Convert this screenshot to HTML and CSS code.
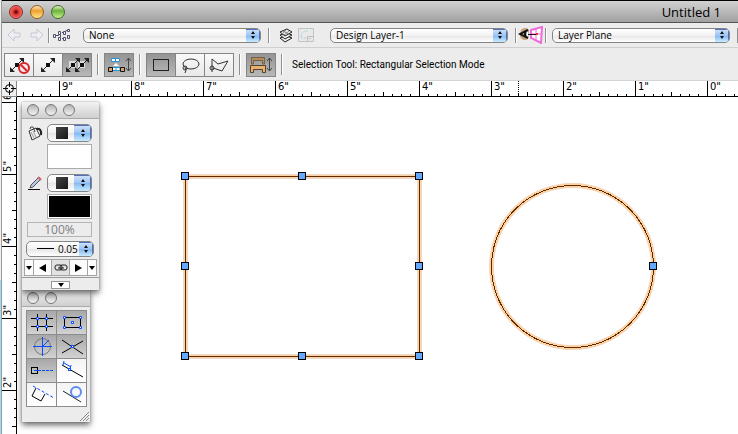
FILE: index.html
```html
<!DOCTYPE html>
<html lang="en">
  <head>
    <meta charset="UTF-8" />
    <meta name="viewport" content="width=device-width, initial-scale=1.0" />
    <title>Untitled 1</title>
    <link rel="stylesheet" href="styles.css">
  </head>
  <body>
    <svg class="defs" aria-hidden="true">
      <defs>
        <symbol id="updown" viewBox="0 0 6 10">
          <path d="M3 1L5 4H1zM3 9L5 6H1z" fill="#111" />
        </symbol>
        <g id="node">
          <path d="M-7 7L6 -6" stroke="#222" />
          <path d="M2 -7H7V-2zM-7 2V7H-2z" fill="#222" />
          <rect x="-2" y="-2" width="4" height="4" fill="#111" />
        </g>
        <g id="handle">
          <rect x="-4" y="-4" width="8" height="8" fill="#000" />
          <rect x="-3" y="-3" width="6" height="6" fill="#65a8ff" />
        </g>
      </defs>
    </svg>

    <main class="window">
      <header class="title-bar">
        <div class="lights">
          <button class="light red" aria-label="Close"></button>
          <button class="light yellow" aria-label="Minimize"></button>
          <button class="light green" aria-label="Zoom"></button>
        </div>
        <h1>Untitled 1</h1>
      </header>

      <nav class="view-bar">
        <button class="icon-btn" aria-label="Back">
          <svg width="14" height="14" viewBox="0 0 14 14"><path d="M1 7L7 1V5H13V9H7V13z" fill="#eeeef4" stroke="#c6c6d4" /></svg>
        </button>
        <button class="icon-btn forward" aria-label="Forward">
          <svg width="14" height="14" viewBox="0 0 14 14"><path d="M13 7L7 1V5H1V9H7V13z" fill="#eeeef4" stroke="#c6c6d4" /></svg>
        </button>
        <span class="sep"></span>
        <button class="icon-btn classes" aria-label="Classes">
          <svg width="17" height="14" viewBox="0 0 17 14" fill="#f4f4f4" stroke="#50506a">
            <path d="M3 7.500H6M7.500 6V9M9 4.500H11M9 10.500H11M12.500 6V3L14 2.500" fill="none" />
            <path d="M.5 6.500h2v3h-2zM5.500 3.500h2v3h-2zM5.500 9.500h2v3h-2zM10.500 3.500h2v3h-2zM10.500 9.500h2v3h-2zM14.500 1.500h2v2h-2zM14.500 7.500h2v3h-2z" />
          </svg>
        </button>
        <span class="popup wide">
          <select aria-label="Active class"><option>None</option></select>
          <span class="cap"><svg width="6" height="10"><use href="#updown" /></svg></span>
        </span>
        <span class="sep"></span>
        <button class="icon-btn layers" aria-label="Layers">
          <svg width="14" height="15" viewBox="0 0 14 15" fill="#eee" stroke="#222">
            <path d="M1 10L8 8L13 10L6 14z" /><path d="M1 7L8 5L13 7L6 11z" /><path d="M1 4L8 1L13 4L6 8z" />
            <path d="M4 3L10 6M7 2L3 6M10 3L5 7" stroke="#888" />
          </svg>
        </button>
        <button class="icon-btn" aria-label="Sheet view">
          <svg width="16" height="14" viewBox="0 0 16 14" fill="none">
            <path d="M.5 .5H15.500V13.500H.5z" fill="#e9e9e9" stroke="#c2c2c2" />
            <path d="M3 9V6L7 3H11M3 10H8" stroke="#a9d0e4" stroke-dasharray="2 1" />
            <path d="M9.500 13V8.500H15M11 10.500H13" stroke="#bbb" />
          </svg>
        </button>
        <span class="popup wide layer">
          <select aria-label="Active layer"><option>Design Layer-1</option></select>
          <span class="cap"><svg width="6" height="10"><use href="#updown" /></svg></span>
        </span>
        <span class="sep"></span>
        <button class="icon-btn eye" aria-label="Look at plane">
          <svg width="26" height="18" viewBox="0 0 26 18" fill="none">
            <path d="M3 4C6 1 10 2 11 4L10 13C6 16 1 12 2 8z" fill="#c8a27c" />
            <path d="M13 4L24 1L23 17L13 12z" fill="#fff" stroke="#f06bd9" stroke-width="2" />
            <path d="M18 2V15M13 8H24" stroke="#f06bd9" />
            <path d="M10 4L2 8L10 12" fill="#fff" stroke="#111" stroke-width="2" />
            <path d="M8 6Q6 8 8 10" stroke="#111" stroke-width="2" />
            <path d="M10 8.500H19" stroke="#111" /><rect x="18" y="7" width="2" height="2" fill="#e33" />
          </svg>
        </button>
        <span class="sep"></span>
        <span class="popup wide plane">
          <select aria-label="Active plane"><option>Layer Plane</option></select>
          <span class="cap"><svg width="6" height="10"><use href="#updown" /></svg></span>
        </span>
        <span class="sep last"></span>
      </nav>

      <section class="tool-bar">
        <div class="group">
          <button aria-label="Disable interactive scaling">
            <svg width="28" height="22" viewBox="0 0 28 22">
              <use href="#node" x="12" y="11" />
              <circle cx="19" cy="14" r="5" fill="#f5e8e8" fill-opacity=".6" stroke="#d9262c" stroke-width="2" />
              <path d="M16 11L22 17" stroke="#d9262c" stroke-width="2" />
            </svg>
          </button>
          <button aria-label="Single object scaling">
            <svg width="28" height="22" viewBox="0 0 28 22"><use href="#node" x="14" y="11" /></svg>
          </button>
          <button class="on" aria-label="Unrestricted scaling">
            <svg width="28" height="22" viewBox="0 0 28 22">
              <rect x="6" y="7" width="7" height="7" fill="#ddd" /><rect x="15" y="7" width="7" height="7" fill="#ddd" />
              <use href="#node" x="10" y="11" /><use href="#node" x="19" y="11" />
            </svg>
          </button>
        </div>
        <span class="sep"></span>
        <div class="group">
          <button class="on" aria-label="Wall insertion">
            <svg width="28" height="22" viewBox="0 0 28 22" fill="none">
              <path d="M6.500 4.500H14.500V7.500H6.500zM10.500 4V8" fill="#fff" stroke="#2795d3" />
              <path d="M7 13.500H15V16.500H7zM11 13V17" fill="#fff" stroke="#2795d3" />
              <path d="M3.500 13.500H7.500V17.500H3.500zM15.500 13.500H19.500V17.500H15.500z" fill="#d8a468" stroke="#111" />
              <path d="M8 12H14L11 9z" fill="#fff" />
              <path d="M23.500 4V17M21 7L23.500 4L26 7M21 14L23.500 17L26 14" stroke="#444" />
            </svg>
          </button>
        </div>
        <span class="sep"></span>
        <div class="group">
          <button class="on" aria-label="Rectangular selection">
            <svg width="28" height="22" viewBox="0 0 28 22"><rect x="6.500" y="5.500" width="15" height="11" fill="none" stroke="#222" /></svg>
          </button>
          <button aria-label="Lasso selection">
            <svg width="28" height="22" viewBox="0 0 28 22" fill="none" stroke="#333">
              <ellipse cx="15" cy="10" rx="8" ry="5" /><circle cx="9" cy="14" r="2" /><path d="M9 14Q11 16 9 19" />
            </svg>
          </button>
          <button aria-label="Polygonal selection">
            <svg width="28" height="22" viewBox="0 0 28 22" fill="none" stroke="#333">
              <path d="M7 18V5L13 10L23 7L17 17L8 14" /><circle cx="7" cy="14" r="2" />
            </svg>
          </button>
        </div>
        <span class="sep"></span>
        <div class="group">
          <button class="on" aria-label="Wall stretch">
            <svg width="28" height="22" viewBox="0 0 28 22" fill="none">
              <path d="M4.500 10V3.500H17.500V10H15.500V6.500H6.500V10z" fill="#b38a5c" stroke="#776048" />
              <path d="M3.500 18.500V11.500H18.500V18.500H15.500V15.500H6.500V18.500z" fill="#e8b070" stroke="#58422c" />
              <path d="M22.500 4V17M20 7L22.500 4L25 7M20 14L22.500 17L25 14" stroke="#444" />
            </svg>
          </button>
        </div>
        <span class="sep"></span>
        <p class="mode">Selection Tool: Rectangular Selection Mode</p>
      </section>

      <section class="workspace">
        <div class="corner">
          <svg width="13" height="13" viewBox="0 0 13 13" fill="none" stroke="#000">
            <circle cx="6.500" cy="6.500" r="4" /><path d="M6.500 0V5M6.500 8V13M0 6.500H5M8 6.500H13" />
          </svg>
        </div>
        <div class="ruler-x">
          <div class="scale">
            <span></span><span>9"</span><span>8"</span><span>7"</span><span>6"</span><span>5"</span><span>4"</span><span>3"</span><span>2"</span><span>1"</span><span>0"</span>
          </div>
          <i class="cursor-mark"></i>
        </div>
        <div class="ruler-y">
          <div class="scale">
            <span><b>6"</b></span><span><b>5"</b></span><span><b>4"</b></span><span><b>3"</b></span><span><b>2"</b></span><span></span>
          </div>
        </div>
        <svg class="drawing" role="img" aria-label="Rectangle and circle, both selected">
          <g fill="none">
            <rect x="168.500" y="79.500" width="234" height="180" stroke="#ead9cc" stroke-width="5" />
            <rect x="168.500" y="79.500" width="234" height="180" stroke="#ffd0a0" stroke-width="3" />
            <rect x="168.500" y="79.500" width="234" height="180" stroke="#5c2c00" />
            <circle cx="555.500" cy="169.500" r="81" stroke="#ead9cc" stroke-width="5" />
            <circle cx="555.500" cy="169.500" r="81" stroke="#ffd0a0" stroke-width="4" />
            <circle cx="555.500" cy="169.500" r="81" stroke="#5c2c00" shape-rendering="crispEdges" />
          </g>
          <use href="#handle" x="168" y="79" /><use href="#handle" x="285" y="79" /><use href="#handle" x="402" y="79" />
          <use href="#handle" x="168" y="169" /><use href="#handle" x="402" y="169" />
          <use href="#handle" x="168" y="259" /><use href="#handle" x="285" y="259" /><use href="#handle" x="402" y="259" />
          <use href="#handle" x="636" y="169" />
        </svg>
      </section>
    </main>

    <aside class="palette snapping">
      <div class="palette-bar"><i></i><i></i></div>
      <div class="snaps">
        <button class="on" aria-label="Snap to grid">
          <svg width="28" height="22" viewBox="0 0 28 22" fill="#fff">
            <path d="M3 6.500H25M3 14.500H25M9.500 2V19M18.500 2V19" stroke="#000" />
            <path d="M8.500 5.500h2v2h-2zM17.500 5.500h2v2h-2zM8.500 13.500h2v2h-2zM17.500 13.500h2v2h-2z" stroke="#0a4cff" />
          </svg>
        </button>
        <button class="on" aria-label="Snap to object">
          <svg width="28" height="22" viewBox="0 0 28 22" fill="#fff">
            <path d="M6.500 5.500H22.500V15.500H6.500z" fill="none" stroke="#000" />
            <path d="M5.500 4.500h2v2h-2zM21.500 4.500h2v2h-2zM5.500 14.500h2v2h-2zM21.500 14.500h2v2h-2zM13.500 9.500h2v2h-2z" stroke="#0a4cff" />
          </svg>
        </button>
        <button class="on" aria-label="Snap to angle">
          <svg width="28" height="22" viewBox="0 0 28 22" fill="none">
            <circle cx="14.500" cy="10.500" r="8" stroke="#777" />
            <path d="M5 10.500H24M14.500 1V20M14 11L21 4" stroke="#0a4cff" />
          </svg>
        </button>
        <button class="on" aria-label="Snap to intersection">
          <svg width="28" height="22" viewBox="0 0 28 22"><path d="M4 4L25 18M4 17L25 5" stroke="#000" /><rect x="13.500" y="9.500" width="2" height="2" fill="#fff" stroke="#0a4cff" /></svg>
        </button>
        <button class="on" aria-label="Smart points">
          <svg width="28" height="22" viewBox="0 0 28 22" fill="none">
            <rect x="3.500" y="7.500" width="6" height="6" stroke="#000" /><path d="M6 10.500H10" stroke="#0a4cff" /><path d="M10 10.500H25" stroke="#0a4cff" stroke-dasharray="3 1" />
          </svg>
        </button>
        <button aria-label="Snap to distance">
          <svg width="28" height="22" viewBox="0 0 28 22" fill="#fff">
            <path d="M4 5L25 17" stroke="#000" /><path d="M6 1L5 5M13 5L12 9M6 3L13 7" stroke="#0a4cff" fill="none" /><rect x="10.500" y="8.500" width="2" height="2" stroke="#0a4cff" />
          </svg>
        </button>
        <button aria-label="Smart edge">
          <svg width="28" height="22" viewBox="0 0 28 22" fill="none">
            <path d="M8 4L4 12L13 17L17 10" stroke="#000" /><path d="M5 2L26 14" stroke="#0a4cff" stroke-dasharray="3 2" />
          </svg>
        </button>
        <button aria-label="Snap to tangent">
          <svg width="28" height="22" viewBox="0 0 28 22" fill="none">
            <path d="M5 7L23 18" stroke="#222" /><circle cx="18" cy="8" r="5" stroke="#3970f4" stroke-width="2" stroke-opacity=".8" />
          </svg>
        </button>
      </div>
      <svg class="grip" width="9" height="9" viewBox="0 0 9 9"><path d="M0 9L9 0M3 9L9 3M6 9L9 6" stroke="#888" /></svg>
    </aside>

    <aside class="palette attributes">
      <div class="palette-bar"><i></i><i></i><i></i></div>
      <div class="attrs">
        <svg class="attr-icon" width="16" height="15" viewBox="0 0 16 15">
          <path d="M2 5L9 2L13 10L5 14z" fill="#f2f2f2" stroke="#333" /><path d="M4 6L7 12M6 5L9 11" stroke="#999" />
          <path d="M3 3Q3 0 6 1L8 6" fill="none" stroke="#444" /><path d="M9 3Q15 2 14 9" fill="none" stroke="#222" stroke-width="2" />
        </svg>
        <span class="popup style">
          <select aria-label="Fill style"><option value="solid" label=" "></option></select>
          <i class="chip"></i>
          <span class="cap"><svg width="6" height="10"><use href="#updown" /></svg></span>
        </span>
        <button class="swatch white" aria-label="Fill color"></button>
        <svg class="attr-icon" width="16" height="15" viewBox="0 0 16 15">
          <path d="M3 12L4 9L12 1L14 3L6 11z" fill="#b9c7e8" stroke="#555" /><path d="M11 1L14 4" stroke="#d66" stroke-width="2" />
          <path d="M1 13.500H13" stroke="#111" />
        </svg>
        <span class="popup style">
          <select aria-label="Pen style"><option value="solid" label=" "></option></select>
          <i class="chip"></i>
          <span class="cap"><svg width="6" height="10"><use href="#updown" /></svg></span>
        </span>
        <button class="swatch black" aria-label="Pen color"></button>
      </div>
      <input class="opacity" type="text" value="100%" aria-label="Opacity" disabled />
      <span class="popup weight">
        <select aria-label="Line thickness"><option>0.05</option></select>
        <i class="stroke"></i>
        <span class="cap"><svg width="6" height="10"><use href="#updown" /></svg></span>
      </span>
      <div class="markers">
        <button aria-label="Start marker style"><svg width="6" height="4"><path d="M0 0H6L3 4z" /></svg></button>
        <button class="big" aria-label="Start marker"><svg width="8" height="8"><path d="M7 0V8L0 4z" /></svg></button>
        <button class="link" aria-label="Link markers">
          <svg width="14" height="8" viewBox="0 0 14 8" fill="none" stroke="#222"><rect x="1" y="1" width="7" height="5" rx="2" /><rect x="6" y="1" width="7" height="5" rx="2" /><path d="M4 4H10" /></svg>
        </button>
        <button class="big" aria-label="End marker"><svg width="8" height="8"><path d="M1 0V8L8 4z" /></svg></button>
        <button aria-label="End marker style"><svg width="6" height="4"><path d="M0 0H6L3 4z" /></svg></button>
      </div>
      <div class="palette-foot">
        <button aria-label="More options"><svg width="6" height="4"><path d="M0 0H6L3 4z" /></svg></button>
      </div>
    </aside>
  </body>
</html>
```
FILE: styles.css
```css
* {
  box-sizing: border-box;
}
body {
  margin: 0;
  padding-left: 1px;
  font-family: "Open Sans", "Noto Sans", sans-serif;
  font-size: 10px;
  color: #000;
  background: linear-gradient(#f1f1f1 280px, #9edcf8 280px);
}
button {
  padding: 0;
  border: none;
  background: none;
  display: flex;
  align-items: center;
  justify-content: center;
}
svg {
  display: block;
  flex: none;
}
.defs {
  position: absolute;
  width: 0;
  height: 0;
}

.window {
  display: flex;
  flex-direction: column;
  height: 100vh;
  overflow: hidden;
  border-left: 1px solid #999;
  background: #fff;
}
.title-bar {
  flex: none;
  display: flex;
  align-items: center;
  justify-content: space-between;
  height: 23px;
  padding: 0 17px 0 7px;
  border-top: 1px solid #000;
  border-bottom: 1px solid #555;
  background: linear-gradient(#d2d2d2, #a0a0a0);
}
.title-bar h1 {
  margin: 0;
  font-size: 13px;
  font-weight: normal;
  line-height: 20px;
}
.lights {
  display: flex;
  gap: 7px;
}
.light {
  width: 14px;
  height: 14px;
  border: 1px solid #555;
  border-radius: 50%;
}
.red {
  border-color: #8a2420;
  background: radial-gradient(circle at 50% 50%, #7a0808 1px, #e0403a 3px, #e8544c 5px, #ffb0a8 7px);
}
.yellow {
  border-color: #94601c;
  background: linear-gradient(#fbe6c0, #f0a030 40%, #ffe888);
}
.green {
  border-color: #406c28;
  background: linear-gradient(#dcf0c8, #6cb23c 40%, #c8f090);
}

/* view bar */
.view-bar {
  flex: none;
  display: flex;
  align-items: center;
  height: 25px;
  padding-left: 5px;
  background: #ececec;
  border-bottom: 1px solid #cfcfcf;
}
.sep {
  flex: none;
  width: 2px;
  height: 15px;
  border-left: 1px solid #8e8e8e;
  border-right: 1px solid #fff;
}
.sep.last {
  width: 1px;
  border-right: none;
}
.forward {
  margin: 0 4px 0 9px;
}
.classes {
  margin: 0 13px 0 3px;
}
.layers {
  margin: 0 5px 0 9px;
}
.eye {
  margin: 0 1px;
}

.popup {
  position: relative;
  display: flex;
  height: 15px;
  border: 1px solid #858585;
  border-radius: 5px;
  background: linear-gradient(#fff, #f2f2f2 50%, #e6e6e6 51%, #fff);
  overflow: hidden;
}
.popup select {
  appearance: none;
  flex: 1;
  min-width: 0;
  margin: 0;
  padding: 0 20px 0 5px;
  border: none;
  outline: none;
  background: none;
  font: inherit;
  line-height: 13px;
  color: #000;
}
.popup .cap {
  position: absolute;
  top: 0;
  right: 0;
  bottom: 0;
  width: 14px;
  display: flex;
  align-items: center;
  justify-content: center;
  pointer-events: none;
  background: linear-gradient(#d4e4fa, #9cc4f4 50%, #84b8f2 51%, #c8ecff);
  box-shadow: inset -1px 1px #5070b8;
}
.wide {
  flex: 1;
  margin-right: 7px;
}
.layer {
  margin-left: 16px;
}
.plane {
  margin-left: 5px;
}

/* tool bar */
.tool-bar {
  flex: none;
  display: flex;
  align-items: center;
  gap: 5px;
  height: 33px;
  padding: 1px 0 0 2px;
  background: #ececec;
  border-bottom: 1px solid #d4d4d4;
}
.tool-bar .sep {
  height: 21px;
}
.group {
  display: flex;
  gap: 1px;
  padding: 1px;
  background: #858585;
}
.group button {
  background: linear-gradient(#fafafa, #e8e8e8);
}
.group button.on {
  background: linear-gradient(#949494, #b8b8b8);
}
.mode {
  margin: 0 0 0 4px;
  font-family: Roboto, sans-serif;
  font-size: 10px;
  line-height: 12px;
}

/* rulers and drawing */
.workspace {
  flex: 1;
  min-height: 0;
  display: grid;
  grid-template-columns: 15px 1fr;
  grid-template-rows: 16px 1fr;
}
.corner {
  display: flex;
  align-items: center;
  justify-content: center;
  background: #f0f0f0;
  border-right: 1px solid #888;
  border-bottom: 1px solid #888;
}
.ruler-x,
.ruler-y {
  position: relative;
  overflow: hidden;
  font-family: "DejaVu Sans", sans-serif;
  font-size: 10px;
  line-height: 10px;
}
.ruler-x {
  border-bottom: 1px solid #000;
}
.ruler-x .scale {
  display: flex;
  height: 100%;
  margin-left: -30px;
}
.ruler-x span {
  flex: none;
  width: 72px;
  padding: 1px 0 0 2px;
  border-left: 1px solid #000;
  background:
    linear-gradient(#000, #000) 35px bottom / 1px 4px no-repeat,
    repeating-linear-gradient(90deg, transparent 0 8px, #000 8px 9px) left bottom / 100% 2px no-repeat;
}
.cursor-mark {
  position: absolute;
  left: 501px;
  top: 0;
  bottom: 0;
  border-left: 1px dotted #000;
}
.ruler-y {
  border-right: 1px solid #000;
}
.ruler-y .scale {
  margin-top: -66px;
}
.ruler-y span {
  display: flex;
  align-items: flex-end;
  height: 72px;
  padding: 0 0 2px 1px;
  border-bottom: 1px solid #000;
  background:
    linear-gradient(#000, #000) right 35px / 4px 1px no-repeat,
    repeating-linear-gradient(transparent 0 8px, #000 8px 9px) right top / 2px 100% no-repeat;
}
.ruler-y b {
  font-weight: normal;
  writing-mode: vertical-rl;
  transform: rotate(180deg);
}
.drawing {
  width: 100%;
  height: 100%;
}

/* floating palettes */
.palette {
  position: absolute;
  left: 22px;
  background: #ececec;
  box-shadow: 0 0 1px #777, 0 3px 6px rgba(0, 0, 0, 0.6);
}
.palette-bar {
  display: flex;
  align-items: center;
  gap: 6px;
  height: 17px;
  padding-left: 5px;
  border-bottom: 1px solid #aaa;
  background: linear-gradient(#f2f2f2, #cfcfcf);
}
.palette-bar i {
  width: 12px;
  height: 12px;
  border: 1px solid #777;
  border-radius: 50%;
  background: linear-gradient(#b4b4b4, #f4f4f4);
}
.attributes {
  top: 102px;
  width: 77px;
}
.attrs {
  display: grid;
  grid-template-columns: 20px 45px;
  row-gap: 2px;
  padding: 5px 0 3px 5px;
}
.attr-icon {
  align-self: center;
}
.popup.style {
  height: 18px;
}
.popup.style .cap {
  width: 17px;
}
.chip {
  position: absolute;
  left: 8px;
  top: 2px;
  width: 12px;
  height: 12px;
  background: linear-gradient(135deg, #444, #181818);
  pointer-events: none;
}
.swatch {
  grid-column: 2;
  height: 25px;
  border: 1px solid #aaa;
}
.swatch.white {
  margin-bottom: 3px;
  background: #fff;
}
.swatch.black {
  background: #000;
  box-shadow: inset 0 0 0 1px #fff;
}
.opacity {
  display: block;
  width: 65px;
  height: 15px;
  margin: 0 5px 4px;
  padding: 0;
  border: 1px solid #b4b4b4;
  background: #ececec;
  font-family: "Open Sans", sans-serif;
  font-size: 12px;
  text-align: center;
  color: #808080;
}
.popup.weight {
  height: 16px;
  margin: 0 5px 2px 4px;
}
.weight select {
  padding-left: 31px;
  padding-right: 0;
}
.stroke {
  position: absolute;
  left: 10px;
  top: 6px;
  width: 17px;
  border-top: 1px solid #000;
}
.markers {
  display: flex;
  margin: 0 2px 1px;
  height: 17px;
  padding: 1px;
  gap: 1px;
  background: #a4a4a4;
}
.markers button {
  flex: 2;
  background: #fcfcfc;
}
.markers .big,
.markers .link {
  flex: 4;
}
.markers .link {
  background: #e2e2e2;
}
.palette-foot {
  display: flex;
  justify-content: center;
  padding: 3px 0 1px;
  border-top: 1px solid #999;
}
.palette-foot button {
  width: 19px;
  height: 8px;
  border: 1px solid #999;
  background: #fff;
}
.snapping {
  top: 290px;
  width: 68px;
  padding-bottom: 15px;
}
.snaps {
  display: grid;
  grid-template-columns: 29px 29px;
  gap: 1px;
  margin: 3px 4px 0;
  padding: 1px;
  width: 61px;
  background: #8c8c8c;
}
.snaps button {
  height: 23px;
  background: linear-gradient(#f4f4f4, #fff);
}
.snaps button.on {
  background: linear-gradient(#a8a8a8, #d2d2d2);
}
.grip {
  position: absolute;
  right: 1px;
  bottom: 1px;
}
```
